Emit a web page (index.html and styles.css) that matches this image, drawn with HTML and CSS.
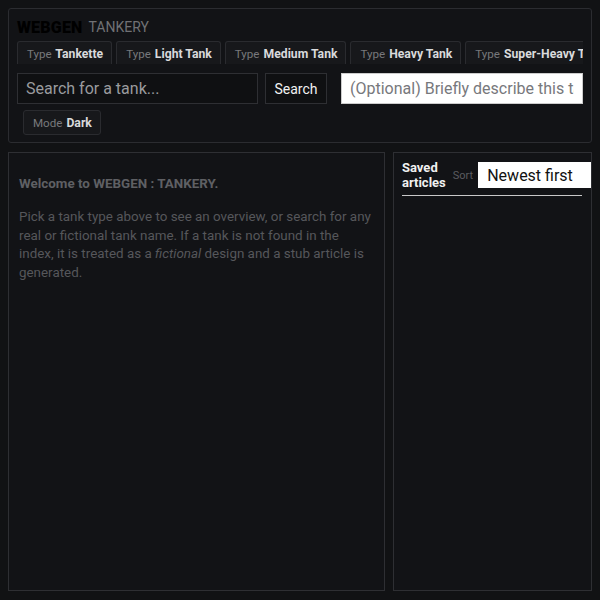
FILE: index.html
```html
<!DOCTYPE html>
<html lang="en">

<head>
    <meta charset="UTF-8">
    <meta name="viewport" content="width=device-width, initial-scale=1.0">
    <title>WEBGEN : TANKERY</title>
    <link rel="stylesheet" href="styles.css">
</head>

<body>
    <header class="top">
        <div class="brand">
            <span class="brand-name">WEBGEN</span>
            <span class="brand-sub">TANKERY</span>
        </div>

        <nav class="tabs">
            <button class="tab"><span class="tab-key">Type</span> Tankette</button>
            <button class="tab"><span class="tab-key">Type</span> Light Tank</button>
            <button class="tab"><span class="tab-key">Type</span> Medium Tank</button>
            <button class="tab"><span class="tab-key">Type</span> Heavy Tank</button>
            <button class="tab"><span class="tab-key">Type</span> Super-Heavy Tank</button>
        </nav>

        <form class="search">
            <input type="text" class="search-input" placeholder="Search for a tank...">
            <button type="submit" class="search-btn">Search</button>
            <input type="text" class="desc-input" placeholder="(Optional) Briefly describe this tank">
        </form>

        <div class="modes">
            <button class="tab"><span class="tab-key">Mode</span> Dark</button>
        </div>
    </header>

    <main class="layout">
        <section class="article">
            <p class="welcome">Welcome to WEBGEN : TANKERY.</p>
            <p class="intro">Pick a tank type above to see an overview, or search for any real or fictional tank name. If a tank is not found in the index, it is treated as a <em>fictional</em> design and a stub article is generated.</p>
        </section>

        <aside class="saved">
            <div class="saved-head">
                <h3>Saved articles</h3>
                <label class="sort-label" for="sort">Sort</label>
                <select id="sort" class="sort">
                    <option>Newest first</option>
                    <option>Oldest first</option>
                    <option>A-Z</option>
                </select>
            </div>
            <ul class="saved-list"></ul>
        </aside>
    </main>
</body>

</html>
```

FILE: styles.css
```css
body {
    font-family: Roboto, "Liberation Sans", sans-serif;
    margin: 8px;
    background-color: #111214;
    color: #ddd;
}

.top {
    border: 1px solid #2b2c30;
    border-radius: 3px;
    padding: 8px 8px 7px 8px;
    height: 118px;
    background-color: #121316;
}

.brand {
    display: flex;
    align-items: center;
    gap: 6px;
    height: 24px;
    padding-bottom: 4px;
    box-sizing: border-box;
}

.brand-name {
    font-size: 16px;
    font-weight: 900;
    color: #000;
    letter-spacing: 0.2px;
}

.brand-sub {
    font-size: 14px;
    color: #707174;
}

.tabs {
    display: flex;
    gap: 4px;
    overflow: hidden;
    white-space: nowrap;
}

.tab {
    font-family: inherit;
    font-size: 12.2px;
    font-weight: 700;
    color: #d9dadc;
    background-color: #17181b;
    border: 1px solid #2a2b2f;
    border-bottom: none;
    border-radius: 3px 3px 0 0;
    padding: 4px 8px 3px 9px;
    height: 23px;
    flex-shrink: 0;
}

.tab-key {
    font-size: 11.6px;
    font-weight: 400;
    color: #77787c;
    margin-right: 1px;
}

.search {
    display: flex;
    margin-top: 9px;
    height: 31px;
}

.search-input {
    width: 241px;
    box-sizing: border-box;
    background-color: #0f1012;
    border: 1px solid #2e2f33;
    color: #ddd;
    font-family: inherit;
    font-size: 16px;
    padding: 0 8px;
}

.search-input::placeholder {
    color: #9a9b9e;
}

.search-btn {
    margin-left: 7px;
    width: 62px;
    background-color: #0f1012;
    border: 1px solid #2e2f33;
    color: #f2f2f2;
    font-family: inherit;
    font-size: 14px;
    cursor: pointer;
}

.desc-input {
    margin-left: 14px;
    width: 242px;
    box-sizing: border-box;
    background-color: #fff;
    border: 1px solid #ccc;
    font-family: inherit;
    font-size: 16px;
    padding: 0 8px;
}

.desc-input::placeholder {
    color: #77787c;
}

.modes {
    margin-top: 6px;
    padding-left: 6px;
}

.modes .tab {
    border-bottom: 1px solid #2a2b2f;
    border-radius: 3px;
    height: 25px;
}

.layout {
    display: flex;
    gap: 8px;
    margin-top: 9px;
    height: 439px;
}

.article {
    width: 377px;
    box-sizing: border-box;
    border: 1px solid #2e2f33;
    background-color: #121316;
    padding: 23px 10px 10px 10px;
}

.welcome {
    margin: 0 0 17px 0;
    font-size: 13.4px;
    font-weight: 700;
    color: #5f6064;
}

.intro {
    margin: 0;
    font-size: 13.4px;
    line-height: 18.6px;
    color: #56575b;
}

.saved {
    flex: 1;
    border: 1px solid #2e2f33;
    background-color: #121316;
    padding: 7px 9px 9px 8px;
    overflow: hidden;
}

.saved-head {
    display: flex;
    align-items: center;
    border-bottom: 1px solid #c8c8c8;
    padding-bottom: 5px;
}

.saved-head h3 {
    margin: 0;
    font-size: 13px;
    line-height: 15px;
    font-weight: 700;
    color: #f0f0f0;
    width: 44px;
}

.sort-label {
    font-size: 11px;
    color: #5b5c60;
    margin-left: 7px;
}

.sort {
    margin-left: 5px;
    height: 26px;
    width: 118px;
    flex-shrink: 0;
    background-color: #fff;
    color: #111;
    border: none;
    font-family: inherit;
    font-size: 16px;
    padding: 0 9px;
    appearance: none;
}

.saved-list {
    list-style-type: none;
    padding: 0;
    margin: 0;
}
```
